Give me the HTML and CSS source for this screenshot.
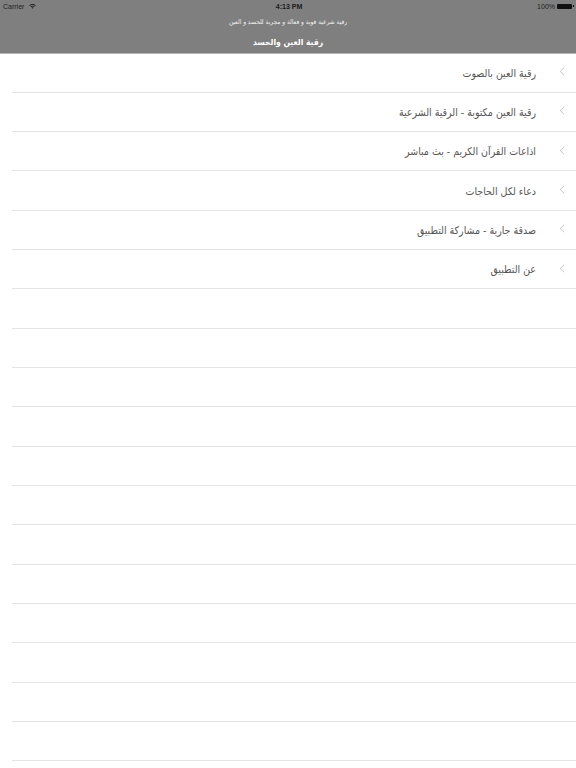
FILE: index.html
```html
<!DOCTYPE html>
<html lang="ar">
<head>
<meta charset="utf-8">
<title>رقية العين والحسد</title>
<link rel="stylesheet" href="styles.css">
</head>
<body>
<header class="header">
  <div class="status">
    <div class="status-left">
      <span>Carrier</span>
      <svg class="wifi" viewBox="0 0 10 8" width="7" height="6"><path d="M5 8 3.6 6.4C4.4 5.7 5.6 5.7 6.4 6.4ZM2.9 5.6 2 4.6C3.7 3.2 6.3 3.2 8 4.6L7.1 5.6C5.9 4.6 4.1 4.6 2.9 5.6ZM1.3 3.9.4 2.9C3 .6 7 .6 9.6 2.9L8.7 3.9C6.6 2 3.4 2 1.3 3.9Z" fill="#222"/></svg>
    </div>
    <div class="status-time">4:13 PM</div>
    <div class="status-right">
      <span>100%</span>
      <span class="battery"><span class="battery-cap"></span></span>
    </div>
  </div>
  <div class="subtitle">رقية شرعية قوية و فعالة و مجربة للحسد و العين</div>
  <div class="title">رقية العين والحسد</div>
</header>
<main class="list">
  <div class="row"><span class="row-text">رقية العين بالصوت</span><svg class="chev" viewBox="0 0 6 9" width="6" height="9"><path d="M5 .8 1.2 4.5 5 8.2" fill="none" stroke="#b4b4b4" stroke-width=".8"/></svg></div>
  <div class="row"><span class="row-text">رقية العين مكتوبة - الرقية الشرعية</span><svg class="chev" viewBox="0 0 6 9" width="6" height="9"><path d="M5 .8 1.2 4.5 5 8.2" fill="none" stroke="#b4b4b4" stroke-width=".8"/></svg></div>
  <div class="row"><span class="row-text">اذاعات القرآن الكريم - بث مباشر</span><svg class="chev" viewBox="0 0 6 9" width="6" height="9"><path d="M5 .8 1.2 4.5 5 8.2" fill="none" stroke="#b4b4b4" stroke-width=".8"/></svg></div>
  <div class="row"><span class="row-text">دعاء لكل الحاجات</span><svg class="chev" viewBox="0 0 6 9" width="6" height="9"><path d="M5 .8 1.2 4.5 5 8.2" fill="none" stroke="#b4b4b4" stroke-width=".8"/></svg></div>
  <div class="row"><span class="row-text">صدقة جارية - مشاركة التطبيق</span><svg class="chev" viewBox="0 0 6 9" width="6" height="9"><path d="M5 .8 1.2 4.5 5 8.2" fill="none" stroke="#b4b4b4" stroke-width=".8"/></svg></div>
  <div class="row"><span class="row-text">عن التطبيق</span><svg class="chev" viewBox="0 0 6 9" width="6" height="9"><path d="M5 .8 1.2 4.5 5 8.2" fill="none" stroke="#b4b4b4" stroke-width=".8"/></svg></div>
  <div class="row"></div><div class="row"></div><div class="row"></div><div class="row"></div>
  <div class="row"></div><div class="row"></div><div class="row"></div><div class="row"></div>
  <div class="row"></div><div class="row"></div><div class="row"></div><div class="row"></div>
</main>
</body>
</html>
```
FILE: styles.css
```css
html, body {
  margin: 0;
  padding: 0;
  background: #fff;
  height: 768px;
  overflow: hidden;
}
body {
  font-family: "DejaVu Sans Condensed", "DejaVu Sans", sans-serif;
  font-stretch: condensed;
}
.header {
  height: 53.5px;
  box-sizing: border-box;
  background: #7f7f7f;
  border-bottom: 1px solid #b5b5b5;
  display: flex;
  flex-direction: column;
  align-items: center;
}
.status {
  align-self: stretch;
  height: 12px;
  padding: 0 3px;
  display: flex;
  justify-content: space-between;
  align-items: center;
  position: relative;
  font-family: "Liberation Sans", sans-serif;
  font-stretch: normal;
  font-size: 7px;
  color: #222;
}
.status-left, .status-right {
  display: flex;
  align-items: center;
  gap: 2px;
}
.status-left {
  gap: 5px;
}
.status-time {
  font-weight: 700;
  position: absolute;
  left: 0;
  right: 0;
  padding-left: 2px;
  text-align: center;
  color: #1c1c1c;
}
.battery {
  width: 15px;
  height: 5px;
  background: #111;
  position: relative;
  margin-right: 1px;
  border-radius: 1px;
}
.battery-cap {
  position: absolute;
  right: -1.5px;
  top: 1.5px;
  width: 1px;
  height: 2px;
  background: #111;
}
.subtitle {
  margin-top: 5px;
  height: 10px;
  line-height: 10px;
  font-size: 6.5px;
  color: #f0f0f0;
  direction: rtl;
}
.title {
  margin-top: 7px;
  height: 16px;
  line-height: 16px;
  font-size: 8.5px;
  font-weight: 700;
  color: #fff;
  direction: rtl;
}
.row {
  height: 39.33px;
  box-sizing: border-box;
  margin-left: 12px;
  border-bottom: 1px solid #e4e4e4;
  display: flex;
  justify-content: flex-end;
  align-items: center;
  padding-right: 11px;
}
.row-text {
  direction: rtl;
  font-size: 10.5px;
  color: #555;
  margin-right: 23px;
}
.chev {
  margin-bottom: 2px;
}
```
